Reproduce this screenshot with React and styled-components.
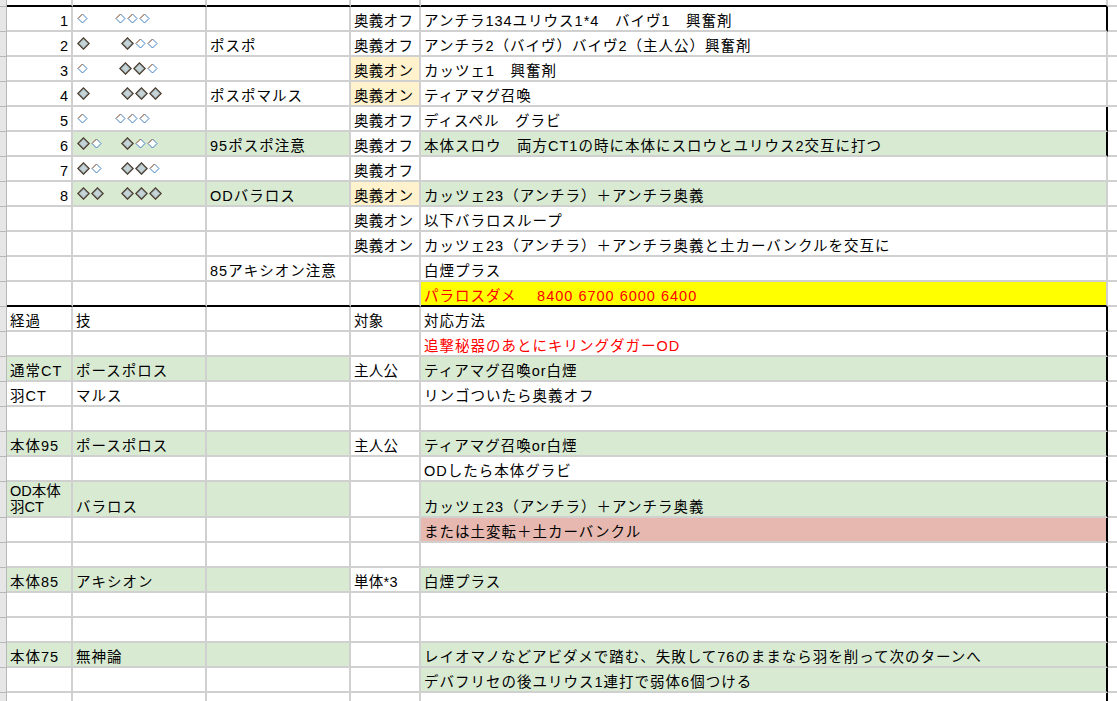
import React from "react";
import styled, { createGlobalStyle } from "styled-components";

const Global = createGlobalStyle`
  html, body { margin: 0; padding: 0; background: #fff; }
  body { font-family: "Liberation Sans", "Noto Sans CJK JP", sans-serif; }
`;

const COLS = "7px 66px 134px 144px 70px 687px 1fr";
const LINE = "#d0d0d0";

const Sheet = styled.div`
  width: 1117px;
  height: 701px;
  overflow: hidden;
  background: #fff;
`;

const Row = styled.div`
  display: grid;
  grid-template-columns: ${COLS};
  height: ${(p) => p.$h}px;
`;

const Gutter = styled.div`
  background: #e6e6e6;
  border-right: 1px solid #b8b8b8;
  border-bottom: 1px solid #b8b8b8;
  box-sizing: border-box;
`;

const Cell = styled.div`
  box-sizing: border-box;
  background: ${(p) => p.$bg || "#fff"};
  border-right: 2px solid ${(p) => (p.$blackRight ? "#000" : LINE)};
  border-bottom: 2px solid ${(p) => (p.$blackBottom ? "#000" : LINE)};
  color: ${(p) => p.$color || "#000"};
  font-size: 14.5px;
  letter-spacing: 1px;
  line-height: 16px;
  padding: 0 2px 1px 3px;
  display: flex;
  flex-direction: column;
  justify-content: flex-end;
  align-items: ${(p) => (p.$right ? "flex-end" : "flex-start")};
  white-space: nowrap;
  overflow: hidden;
`;

const Extra = styled.div`
  border-bottom: 2px solid ${LINE};
  box-sizing: border-box;
`;

const Gems = styled.div`
  display: flex;
  align-items: center;
  height: 100%;
  padding-top: 0;
`;
const Group = styled.div`
  display: flex;
  align-items: center;
  gap: 1px;
  width: ${(p) => p.$w}px;
`;

const Small = () => (
  <svg width="11" height="11" viewBox="0 0 11 11">
    <polygon points="5.5,1 10,5.5 5.5,10 1,5.5" fill="#fff" stroke="#3f7fc2" strokeWidth="1" />
    <polyline points="1,5.5 5.5,1" fill="none" stroke="#d07a3a" strokeWidth="1" />
  </svg>
);
const Big = () => (
  <svg width="13" height="13" viewBox="0 0 13 13">
    <polygon points="6.5,0.8 12.2,6.5 6.5,12.2 0.8,6.5" fill="#a8bcc4" stroke="#4a3a2a" strokeWidth="1.2" />
    <polygon points="6.5,3 10,6.5 6.5,10 3,6.5" fill="#c6d4d8" />
  </svg>
);

const G = "#d9ead3";
const O = "#fff2cc";
const P = "#e6b8af";
const Y = "#ffff00";

const gemSets = [
  ["s", "sss"], ["b", "bss"], ["s", "bbs"], ["b", "bbb"],
  ["s", "sss"], ["bs", "bss"], ["bs", "bbs"], ["bb", "bbb"],
];

const GemCell = ({ set }) => (
  <Gems>
    <Group $w={set[0] === "s" ? 38 : 40}>
      {set[0].split("").map((c, i) => (c === "b" ? <Big key={i} /> : <Small key={i} />))}
    </Group>
    <Group $w={60} style={{ marginLeft: set[1][0] === "b" ? 4 : 0 }}>
      {set[1].split("").map((c, i) => (c === "b" ? <Big key={i} /> : <Small key={i} />))}
    </Group>
  </Gems>
);

const rows = [
  { n: 1, gem: 0, d: "奥義オフ", e: "アンチラ134ユリウス1*4　バイヴ1　興奮剤", br: true },
  { n: 2, gem: 1, c: "ポスポ", d: "奥義オフ", e: "アンチラ2（バイヴ）バイヴ2（主人公）興奮剤" },
  { n: 3, gem: 2, d: "奥義オン", dbg: O, e: "カッツェ1　興奮剤" },
  { n: 4, gem: 3, c: "ポスポマルス", d: "奥義オン", dbg: O, e: "ティアマグ召喚" },
  { n: 5, gem: 4, d: "奥義オフ", e: "ディスペル　グラビ", br: true },
  { n: 6, gem: 5, c: "95ポスポ注意", d: "奥義オフ", e: "本体スロウ　両方CT1の時に本体にスロウとユリウス2交互に打つ", bg: G, dbg: "#fff", br: true },
  { n: 7, gem: 6, d: "奥義オフ", e: "" },
  { n: 8, gem: 7, c: "ODバラロス", d: "奥義オン", dbg: O, e: "カッツェ23（アンチラ）＋アンチラ奥義", bg: G },
  { d: "奥義オン", e: "以下バラロスループ" },
  { d: "奥義オン", e: "カッツェ23（アンチラ）＋アンチラ奥義と土カーバンクルを交互に" },
  { c: "85アキシオン注意", e: "白煙プラス" },
  { e: "パラロスダメ　 8400 6700 6000 6400", ebg: Y, ecol: "#ff0000", bb: true },
  { a: "経過", b: "技", d: "対象", e: "対応方法", br: true },
  { e: "追撃秘器のあとにキリングダガーOD", ecol: "#ff0000", br: true },
  { a: "通常CT", b: "ポースポロス", d: "主人公", e: "ティアマグ召喚or白煙", bg: G, dbg: "#fff", br: true },
  { a: "羽CT", b: "マルス", e: "リンゴついたら奥義オフ", br: true },
  { br: true },
  { a: "本体95", b: "ポースポロス", d: "主人公", e: "ティアマグ召喚or白煙", bg: G, dbg: "#fff", br: true },
  { e: "ODしたら本体グラビ", br: true },
  { a: ["OD本体", "羽CT"], b: "バラロス", e: "カッツェ23（アンチラ）＋アンチラ奥義", bg: G, dbg: "#fff", br: true, h: 36 },
  { e: "または土変転＋土カーバンクル", ebg: P, br: true },
  { br: true },
  { a: "本体85", b: "アキシオン", d: "単体*3", e: "白煙プラス", bg: G, dbg: "#fff", br: true },
  { br: true },
  { br: true },
  { a: "本体75", b: "無神論", e: "レイオマノなどアビダメで踏む、失敗して76のままなら羽を削って次のターンへ", bg: G, dbg: "#fff", br: true },
  { e: "デバフリセの後ユリウス1連打で弱体6個つける", ebg: G, br: true },
  { br: true },
];

export default function App() {
  return (
    <Sheet>
      <Global />
      <Row $h={7}>
        <Gutter />
        {[0, 1, 2, 3].map((i) => <Cell key={i} $blackBottom />)}
        <Cell $blackBottom />
        <Extra />
      </Row>
      {rows.map((r, i) => {
        const bg = r.bg;
        const bb = r.bb;
        return (
          <Row key={i} $h={r.h || 25}>
            <Gutter />
            <Cell $right={!!r.n} $bg={r.n ? "#fff" : bg} $blackBottom={bb} style={Array.isArray(r.a) ? { letterSpacing: 0 } : undefined}>
              {r.n ? r.n : Array.isArray(r.a) ? r.a.map((t) => <span key={t}>{t}</span>) : r.a}
            </Cell>
            <Cell $bg={r.gem != null ? (r.n === 6 || r.n === 8 ? G : "#fff") : bg} $blackBottom={bb} style={r.gem != null ? { padding: "0 0 0 4px" } : undefined}>
              {r.gem != null ? <GemCell set={gemSets[r.gem]} /> : r.b}
            </Cell>
            <Cell $bg={bg} $blackBottom={bb}>{r.c}</Cell>
            <Cell $bg={r.dbg || bg} $blackBottom={bb} style={{ letterSpacing: 0.3 }}>{r.d}</Cell>
            <Cell $bg={r.ebg || bg} $color={r.ecol} $blackBottom={bb} $blackRight={r.br}>{r.e}</Cell>
            <Extra />
          </Row>
        );
      })}
    </Sheet>
  );
}
